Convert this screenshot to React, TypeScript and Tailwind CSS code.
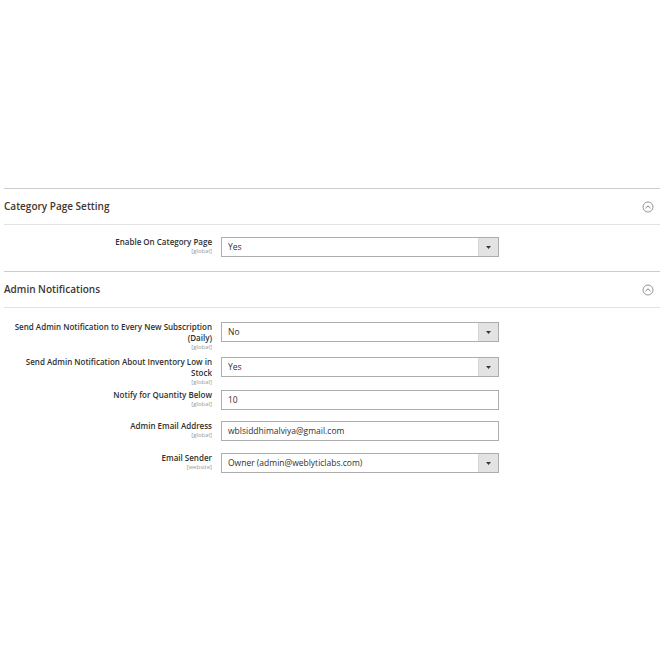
const ChevronCircle = () => (
  <svg width="12" height="12" viewBox="0 0 12 12" fill="none">
    <circle cx="6" cy="6" r="5" stroke="#8a8a8a" strokeWidth="0.9" />
    <path d="M3.8 6.9 L6 4.8 L8.2 6.9" stroke="#6b6b6b" strokeWidth="0.9" strokeLinecap="round" strokeLinejoin="round" />
  </svg>
);

interface FieldProps {
  label: string[];
  scope: string;
  value: string;
  select?: boolean;
  height: string;
}

const Field = ({ label, scope, value, select, height }: FieldProps) => (
  <div className={`flex items-start ${height}`}>
    <div className="-mt-[1.5px] w-[208px] text-right">
      <div className="text-[8px] leading-[11px] font-semibold text-[#303030]">
        {label.map((l, i) => (
          <div key={i}>{l}</div>
        ))}
      </div>
      <div className="text-[6px] leading-[8px] text-[#9a9a9a]">[{scope}]</div>
    </div>
    <div className="ml-[9px] flex h-[20px] w-[278px] border border-[#adadad] bg-white">
      <div className="flex flex-1 items-center pl-[6px] text-[8.5px] text-[#303030]">{value}</div>
      {select && (
        <div className="flex w-[20px] items-center justify-center border-l border-[#d6d6d6] bg-[#e3e3e3]">
          <svg width="5" height="3" viewBox="0 0 5 3">
            <path d="M0 0 L5 0 L2.5 3 Z" fill="#41362f" />
          </svg>
        </div>
      )}
    </div>
  </div>
);

const SectionHeader = ({ title }: { title: string }) => (
  <div className="flex h-[36px] items-center justify-between border-t border-[#cccccc]">
    <span className="text-[10px] font-semibold text-[#41362f]">{title}</span>
    <div className="mr-[6px]">
      <ChevronCircle />
    </div>
  </div>
);

export default function App() {
  return (
    <div className="h-[670px] w-[670px] bg-white" style={{ fontFamily: '"Open Sans", sans-serif' }}>
      <div className="ml-[4px] w-[656px] pt-[188px]">
        <SectionHeader title="Category Page Setting" />
        <div className="h-[47px] border-t border-[#e3e3e3] pt-[12px]">
          <Field label={["Enable On Category Page"]} scope="global" value="Yes" select height="h-[30px]" />
        </div>
        <SectionHeader title="Admin Notifications" />
        <div className="border-t border-[#e3e3e3] pt-[14px]">
          <Field
            label={["Send Admin Notification to Every New Subscription", "(Daily)"]}
            scope="global"
            value="No"
            select
            height="h-[35px]"
          />
          <Field
            label={["Send Admin Notification About Inventory Low in", "Stock"]}
            scope="global"
            value="Yes"
            select
            height="h-[33px]"
          />
          <Field label={["Notify for Quantity Below"]} scope="global" value="10" height="h-[31px]" />
          <Field label={["Admin Email Address"]} scope="global" value="wblsiddhimalviya@gmail.com" height="h-[32px]" />
          <Field label={["Email Sender"]} scope="website" value="Owner (admin@weblyticlabs.com)" select height="h-[32px]" />
        </div>
      </div>
    </div>
  );
}
